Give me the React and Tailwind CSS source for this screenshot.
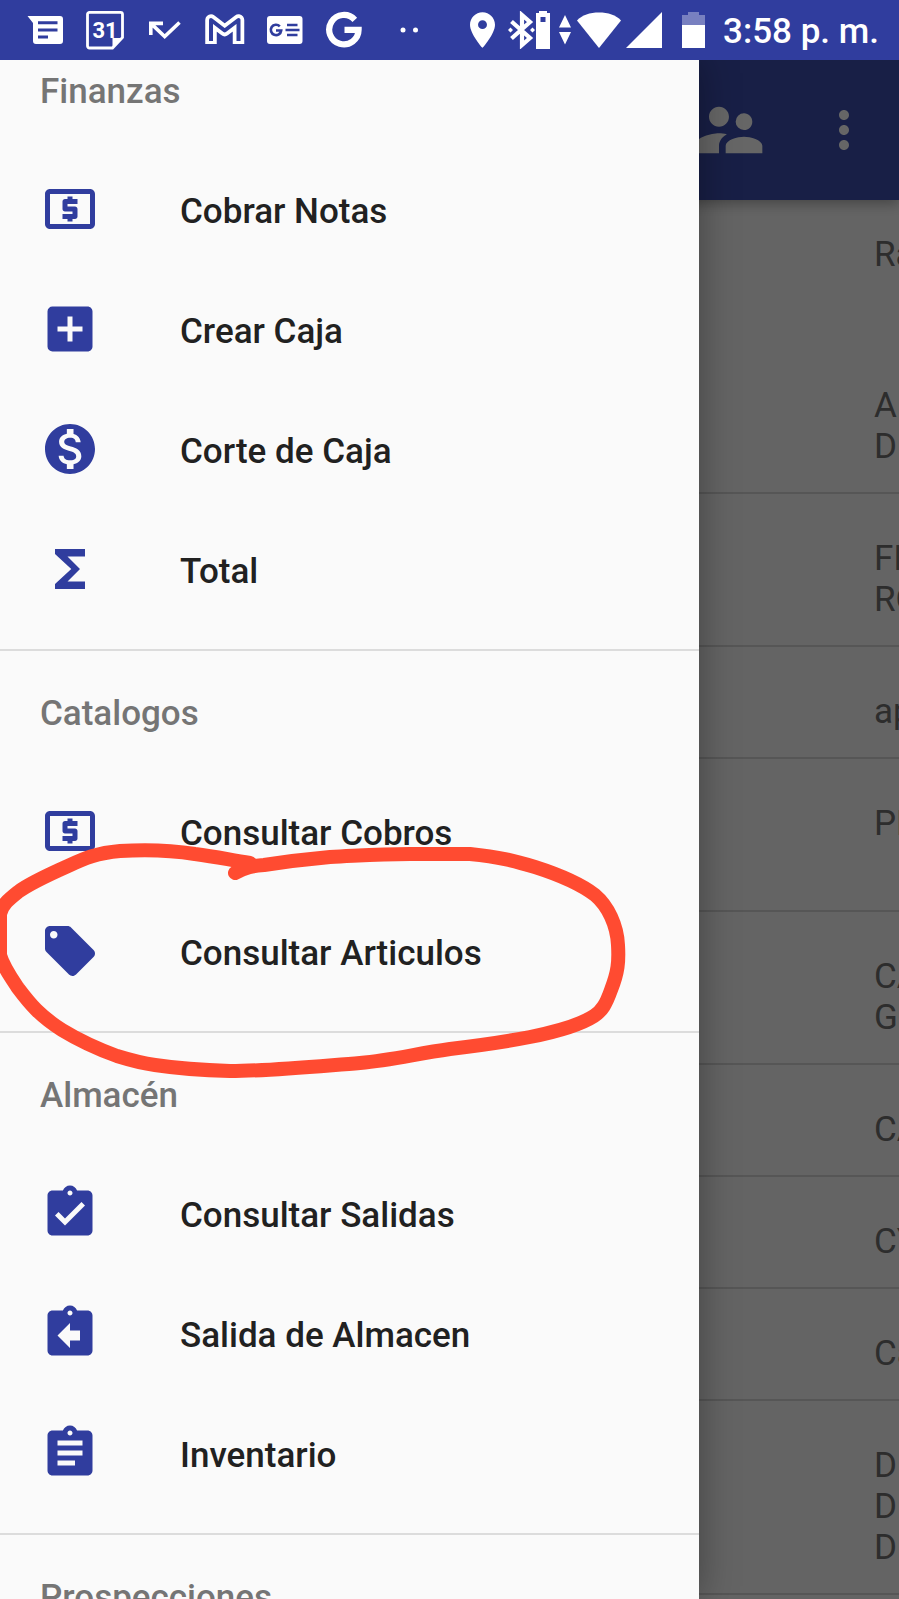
import {
  MdAddBox,
  MdFunctions,
  MdLocalAtm,
  MdLocalOffer,
  MdMonetizationOn,
  MdMoreVert,
  MdSupervisorAccount,
} from "react-icons/md";

// clipboard shape shared by the three warehouse icons
const Clipboard = ({ className, children }) => (
  <svg viewBox="0 0 24 24" className={className} fill="currentColor">
    <path d="M19 3h-4.180C14.400 1.840 13.300 1 12 1c-1.300 0-2.400.840-2.820 2H5c-1.100 0-2 .900-2 2v14c0 1.100.900 2 2 2h14c1.100 0 2-.900 2-2V5c0-1.100-.900-2-2-2zm-7 0c.550 0 1 .450 1 1s-.450 1-1 1-1-.450-1-1 .450-1 1-1z" />
    <g fill="#fafafa">{children}</g>
  </svg>
);

const ClipboardCheck = ({ className }) => (
  <Clipboard className={className}>
    <path d="M10 17l-4-4 1.410-1.410L10 14.170l6.590-6.590L18 9z" />
  </Clipboard>
);

const ClipboardReturn = ({ className }) => (
  <Clipboard className={className}>
    <path d="M12 18l-5-5 5-5v3h4v4h-4z" />
  </Clipboard>
);

const ClipboardText = ({ className }) => (
  <Clipboard className={className}>
    <path d="M14 17H7v-2h7zM17 13H7v-2h10zM17 9H7V7h10z" />
  </Clipboard>
);

const sections = [
  {
    title: "Finanzas",
    items: [
      { label: "Cobrar Notas", icon: MdLocalAtm },
      { label: "Crear Caja", icon: MdAddBox },
      { label: "Corte de Caja", icon: MdMonetizationOn },
      { label: "Total", icon: MdFunctions },
    ],
  },
  {
    title: "Catalogos",
    items: [
      { label: "Consultar Cobros", icon: MdLocalAtm },
      { label: "Consultar Articulos", icon: MdLocalOffer },
    ],
  },
  {
    title: "Almacén",
    items: [
      { label: "Consultar Salidas", icon: ClipboardCheck },
      { label: "Salida de Almacen", icon: ClipboardReturn },
      { label: "Inventario", icon: ClipboardText },
    ],
  },
  { title: "Prospecciones", items: [] },
];

const clients = [
  ["Ra", ""],
  ["A", "D"],
  ["FI", "RO"],
  ["ap"],
  ["PR", ""],
  ["CA", "G"],
  ["CA"],
  ["CY"],
  ["Ca"],
  ["D", "D", "D"],
];

const StatusBar = () => (
  <header className="flex h-[60px] shrink-0 items-center justify-between bg-[#303d9e] pr-5 pl-[25px] text-white">
    <div className="flex items-center gap-5">
      {/* messages */}
      <svg viewBox="0 0 40 40" className="size-10">
        <path d="M2.500 6H35a3 3 0 0 1 3 3v22a3 3 0 0 1-3 3H11a3 3 0 0 1-3-3V13z" fill="currentColor" />
        <path d="M13 12.800h19.500M13 20h19.500M13 27h10" stroke="#303d9e" strokeWidth="3" />
      </svg>
      {/* calendar */}
      <svg viewBox="0 0 40 40" className="size-10">
        <path d="M4.500 2.300h31a2 2 0 0 1 2 2v23.200L27.500 38h-23a2 2 0 0 1-2-2V4.300a2 2 0 0 1 2-2z" fill="none" stroke="currentColor" strokeWidth="2.800" />
        <path d="M27.500 38V28h10z" fill="currentColor" />
        <text x="20" y="28" textAnchor="middle" fill="currentColor" className="font-[Roboto,sans-serif] text-[22px] font-bold">
          31
        </text>
      </svg>
      {/* missed call */}
      <svg viewBox="0 0 40 40" className="size-10" fill="none" stroke="currentColor" strokeWidth="3.600">
        <path d="M5.800 25V13.400H18M5.800 13.400L19.700 26.500L34.500 12.500" />
      </svg>
      {/* gmail */}
      <svg viewBox="0 0 40 40" className="size-10" fill="none" strokeLinejoin="round">
        <path d="M6 34V10L19.700 20.500L33.500 10V34" stroke="currentColor" strokeWidth="11.500" />
        <path d="M6 31V10L19.700 20.500L33.500 10V31" stroke="#303d9e" strokeWidth="4" />
      </svg>
      {/* news */}
      <svg viewBox="0 0 40 40" className="size-10">
        <rect x="2" y="6" width="35.500" height="28" rx="3" fill="currentColor" />
        <path d="M14.800 16.300A5.200 5.200 0 1 0 16.200 20.500H11" fill="none" stroke="#303d9e" strokeWidth="2.600" />
        <path d="M22 15h10.500M20.500 20h14M22 25h10.500" stroke="#303d9e" strokeWidth="2.600" />
      </svg>
      {/* google */}
      <svg viewBox="0 0 40 40" className="size-10" fill="none" stroke="currentColor" strokeWidth="6.200">
        <path d="M29.800 9.800A14.700 14.700 0 1 0 33.600 19.800H19.500" />
      </svg>
      <svg viewBox="0 0 40 40" className="size-10" fill="currentColor">
        <circle cx="18" cy="20" r="2.500" />
        <circle cx="30.500" cy="20" r="2.500" />
      </svg>
    </div>

    <div className="flex items-center">
      {/* location */}
      <svg viewBox="5 2 14 20" className="mr-[13px] h-9 w-[25px]" fill="currentColor">
        <path d="M12 2C8.130 2 5 5.130 5 9c0 5.250 7 13 7 13s7-7.750 7-13c0-3.870-3.130-7-7-7zm0 9.500a2.500 2.500 0 0 1 0-5 2.500 2.500 0 0 1 0 5z" />
      </svg>
      {/* bluetooth */}
      <svg viewBox="0 0 27 38" className="h-[38px] w-[27px]" fill="none">
        <path d="M3.500 10.500L22 27L14 34V4L22 11L3.500 27.500" stroke="currentColor" strokeWidth="4.200" />
        <path d="M0 19l2.500-2.500L5 19l-2.500 2.500zM22 19l2.500-2.500L27 19l-2.500 2.500z" fill="currentColor" />
      </svg>
      <svg viewBox="0 0 14 38" className="mr-[9px] ml-px h-[38px] w-[14px]" fill="currentColor">
        <path fillRule="evenodd" d="M0 2h3V0h8v2h3v36H0zM4.500 6v5h5V6z" />
      </svg>
      {/* data arrows */}
      <svg viewBox="0 0 12 30" className="h-[30px] w-3" fill="currentColor">
        <path d="M6 0l6 12.500H0zM0 17h12L6 29.500z" />
      </svg>
      {/* wifi */}
      <svg viewBox="0 0 44 36" className="ml-1.5 h-9 w-11" fill="currentColor">
        <path d="M0 8.500C5 3 13 .500 22 .500S39 3 44 8.500L22 36z" />
      </svg>
      {/* signal */}
      <svg viewBox="0 0 36 36" className="ml-[5px] size-9" fill="currentColor">
        <path d="M36 0v36H0z" />
      </svg>
      {/* battery */}
      <svg viewBox="0 0 23 36" className="ml-5 h-9 w-[23px]" fill="currentColor">
        <path d="M0 3h6V0h11v3h6v10H0z" opacity="0.35" />
        <path d="M0 13h23v23H0z" />
      </svg>
      <time className="ml-[18px] pt-0.5 text-[35px] leading-[41px] font-medium">3:58 p. m.</time>
    </div>
  </header>
);

const ClientsScreen = () => (
  <main className="flex h-full flex-col bg-[#fafafa]">
    <div className="z-10 flex h-[140px] shrink-0 items-center justify-end gap-[45px] bg-[#3d4fae] pr-[25px] text-white shadow-[0_4px_12px_rgba(0,0,0,0.3)]">
      <button aria-label="Clientes">
        <MdSupervisorAccount className="size-20" />
      </button>
      <button aria-label="Más opciones">
        <MdMoreVert className="size-[60px]" />
      </button>
    </div>
    <ul className="-mt-2.5 text-[35px] leading-[41px] text-[#707070]">
      {clients.map((lines, i) => (
        <li key={i} className={`flex justify-end pt-11 pb-[25px] ${i === 0 ? "" : "border-b-2 border-[#d6d6d6]"}`}>
          <div className="w-[25px] whitespace-nowrap">
            {lines.map((line, j) => (
              <p key={j} className="h-[41px]">{line}</p>
            ))}
          </div>
        </li>
      ))}
    </ul>
  </main>
);

const Drawer = () => (
  <nav className="absolute inset-y-0 left-0 z-20 w-7/9 overflow-hidden bg-[#fafafa] text-[35px] leading-[41px] font-medium shadow-[0_0_36px_rgba(0,0,0,0.35)]">
    <div className="-mt-[31px]">
      {sections.map(({ title, items }) => (
        <section key={title} className="border-b-2 border-[#dcdcdc] pb-5">
          <h2 className="flex h-[120px] items-center px-10 pt-1 text-[#757575]">{title}</h2>
          {items.map(({ label, icon: Icon }) => (
            <a key={label} href="#" className="flex h-[120px] items-center gap-20 px-10 text-[#212121]">
              <Icon className="size-[60px] text-[#303d9e]" />
              <span className="pt-1">{label}</span>
            </a>
          ))}
        </section>
      ))}
    </div>
  </nav>
);

// hand-drawn ring around "Consultar Articulos"
const Highlight = () => (
  <svg
    viewBox="0 840 640 245"
    className="pointer-events-none absolute top-[840px] left-0 z-30 h-[245px] w-[640px]"
    fill="none"
    stroke="#ff4b31"
    strokeWidth="14"
    strokeLinecap="round"
    strokeLinejoin="round"
  >
    <path d="M235 873C246 867 252 866 264 865C290 861 308 859 330 857C370 855 380 854 410 854H470C500 857 515 861 535 867C560 875 582 885 595 895C608 906 617 925 618 945C619 962 618 972 611 990C606 1004 602 1011 594 1016C580 1025 560 1031 530 1037C500 1043 475 1046 450 1049C415 1054 392 1060 360 1063C320 1066 270 1071 230 1071C195 1070 175 1068 155 1065C140 1063 130 1060 117 1056C95 1048 80 1041 62 1030C40 1016 30 1004 18 988C10 976 3 966 0 955V914C2 905 8 900 18 892C30 883 50 874 68 866C85 858 97 853 120 851C150 849 170 850 195 854C218 857 230 860 250 863" />
  </svg>
);

export default function App() {
  return (
    <div className="relative flex h-screen flex-col overflow-hidden font-[Roboto,sans-serif]">
      <StatusBar />
      <div className="relative min-h-0 flex-1 overflow-hidden">
        <ClientsScreen />
        <div className="absolute inset-0 z-10 bg-black/60" />
        <Drawer />
      </div>
      <Highlight />
    </div>
  );
}
